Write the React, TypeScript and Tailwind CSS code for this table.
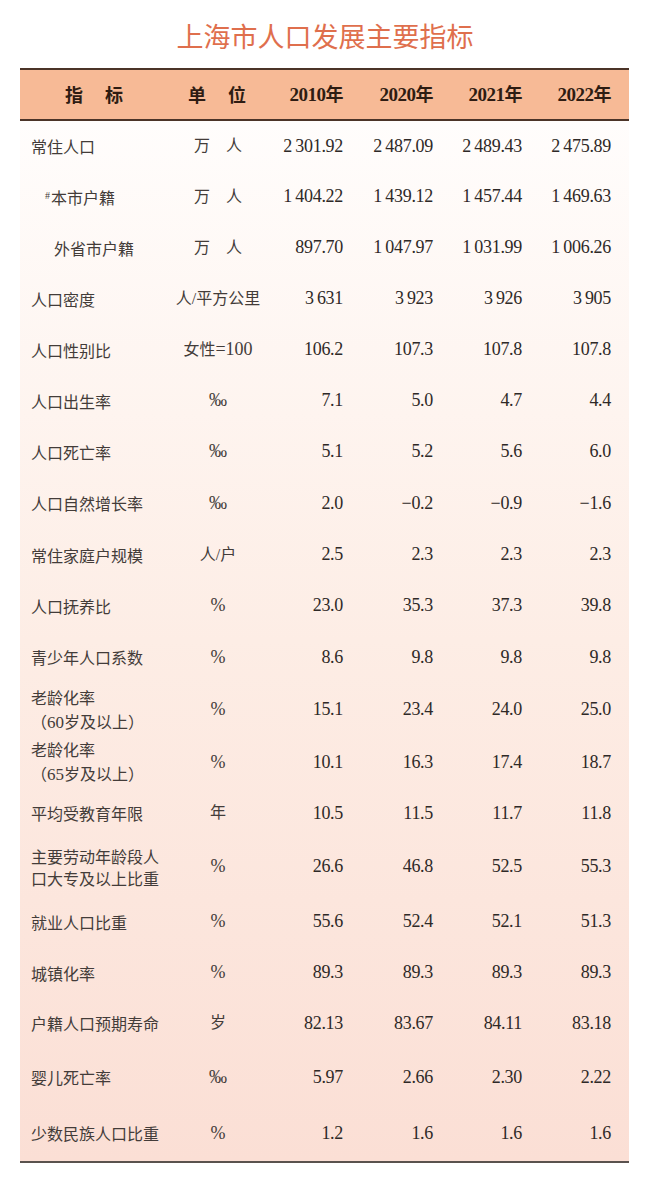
import React from "react";

type Row = {
  label: React.ReactNode;
  unit: React.ReactNode;
  v: string[];
  h: string;
};

const T = "\u2009";
const M = "\u2212";

const Sym = ({ c }: { c: string }) => <span className="font-['Liberation_Serif',serif] text-[18px]">{c}</span>;

const rows: Row[] = [
  { label: <span>常住人口</span>, unit: "万\u3000人", v: [`2${T}301.92`, `2${T}487.09`, `2${T}489.43`, `2${T}475.89`], h: "h-[50px]" },
  {
    label: (
      <span className="pl-[14px]">
        <sup className="text-[10px] font-['Liberation_Serif'] mr-[1px]">#</sup>本市户籍
      </span>
    ),
    unit: "万\u3000人",
    v: [`1${T}404.22`, `1${T}439.12`, `1${T}457.44`, `1${T}469.63`],
    h: "h-[51px]",
  },
  { label: <span className="pl-[23px]">外省市户籍</span>, unit: "万\u3000人", v: ["897.70", `1${T}047.97`, `1${T}031.99`, `1${T}006.26`], h: "h-[51px]" },
  { label: <span>人口密度</span>, unit: "人/平方公里", v: [`3${T}631`, `3${T}923`, `3${T}926`, `3${T}905`], h: "h-[51px]" },
  {
    label: <span>人口性别比</span>,
    unit: (
      <span>
        女性<span className="font-['Liberation_Serif'] text-[18px]">=100</span>
      </span>
    ),
    v: ["106.2", "107.3", "107.8", "107.8"],
    h: "h-[51px]",
  },
  { label: <span>人口出生率</span>, unit: <Sym c="‰" />, v: ["7.1", "5.0", "4.7", "4.4"], h: "h-[51px]" },
  { label: <span>人口死亡率</span>, unit: <Sym c="‰" />, v: ["5.1", "5.2", "5.6", "6.0"], h: "h-[51px]" },
  { label: <span>人口自然增长率</span>, unit: <Sym c="‰" />, v: ["2.0", `${M}0.2`, `${M}0.9`, `${M}1.6`], h: "h-[52px]" },
  { label: <span>常住家庭户规模</span>, unit: "人/户", v: ["2.5", "2.3", "2.3", "2.3"], h: "h-[51px]" },
  { label: <span>人口抚养比</span>, unit: <Sym c="%" />, v: ["23.0", "35.3", "37.3", "39.8"], h: "h-[51px]" },
  { label: <span>青少年人口系数</span>, unit: <Sym c="%" />, v: ["8.6", "9.8", "9.8", "9.8"], h: "h-[52px]" },
  {
    label: (
      <span className="flex flex-col leading-[24px]">
        <span>老龄化率</span>
        <span>
          （<span className="font-['Liberation_Serif'] text-[17px]">60</span>岁及以上）
        </span>
      </span>
    ),
    unit: <Sym c="%" />,
    v: ["15.1", "23.4", "24.0", "25.0"],
    h: "h-[53px]",
  },
  {
    label: (
      <span className="flex flex-col leading-[24px]">
        <span>老龄化率</span>
        <span>
          （<span className="font-['Liberation_Serif'] text-[17px]">65</span>岁及以上）
        </span>
      </span>
    ),
    unit: <Sym c="%" />,
    v: ["10.1", "16.3", "17.4", "18.7"],
    h: "h-[52px]",
  },
  { label: <span>平均受教育年限</span>, unit: "年", v: ["10.5", "11.5", "11.7", "11.8"], h: "h-[50px]" },
  {
    label: (
      <span className="flex flex-col leading-[22px]">
        <span>主要劳动年龄段人</span>
        <span>口大专及以上比重</span>
      </span>
    ),
    unit: <Sym c="%" />,
    v: ["26.6", "46.8", "52.5", "55.3"],
    h: "h-[57px]",
  },
  { label: <span>就业人口比重</span>, unit: <Sym c="%" />, v: ["55.6", "52.4", "52.1", "51.3"], h: "h-[53px]" },
  { label: <span>城镇化率</span>, unit: <Sym c="%" />, v: ["89.3", "89.3", "89.3", "89.3"], h: "h-[49px]" },
  { label: <span>户籍人口预期寿命</span>, unit: "岁", v: ["82.13", "83.67", "84.11", "83.18"], h: "h-[52px]" },
  { label: <span>婴儿死亡率</span>, unit: <Sym c="‰" />, v: ["5.97", "2.66", "2.30", "2.22"], h: "h-[56px]" },
  { label: <span>少数民族人口比重</span>, unit: <Sym c="%" />, v: ["1.2", "1.6", "1.6", "1.6"], h: "h-[56px]" },
];

const grid = "grid grid-cols-[150px_96px_77px_90px_89px_89px] pr-[18px] items-center";

export default function App() {
  return (
    <div className="w-[650px] h-[1177px] bg-white font-['Liberation_Serif','Noto_Sans_CJK_SC',serif] text-[#3a3431]">
      <div className="h-[68px] flex items-center justify-center pt-[4px]">
        <h1 className="font-['Noto_Sans_CJK_SC',sans-serif] text-[27px] font-normal text-[#df6f4d]">
          上海市人口发展主要指标
        </h1>
      </div>
      <div className="mx-[20px] w-[609px]">
        <div className={`${grid} h-[53px] bg-[#f7ba96] border-t-2 border-b-2 border-[#4b3428] text-[#2e1c12] font-bold`}>
          <div className="text-center text-[18px] font-['Noto_Sans_CJK_SC',sans-serif] tracking-[2px]">指　标</div>
          <div className="text-center text-[18px] font-['Noto_Sans_CJK_SC',sans-serif] tracking-[2px]">单　位</div>
          {["2010", "2020", "2021", "2022"].map((y) => (
            <div key={y} className="text-right text-[19px] tracking-[-0.5px]">
              {y}
              <span className="font-['Noto_Sans_CJK_SC',sans-serif] text-[18px]">年</span>
            </div>
          ))}
        </div>
        <div className="bg-linear-to-b from-[#fffdfc] via-[#fdede5] to-[#fbdfd5] border-b-2 border-[#5a524e]">
          {rows.map((r, i) => (
            <div key={i} className={`${grid} ${r.h}`}>
              <div className="pl-[11px] text-[16px] font-['Noto_Sans_CJK_SC',sans-serif] text-[#433c39]">{r.label}</div>
              <div className="text-center text-[16px] font-['Liberation_Serif','Noto_Sans_CJK_SC',serif] text-[#433c39]">
                {r.unit}
              </div>
              {r.v.map((x, j) => (
                <div key={j} className="text-right text-[18px] text-[#2e2927] tracking-[-0.3px]">
                  {x}
                </div>
              ))}
            </div>
          ))}
        </div>
      </div>
    </div>
  );
}
